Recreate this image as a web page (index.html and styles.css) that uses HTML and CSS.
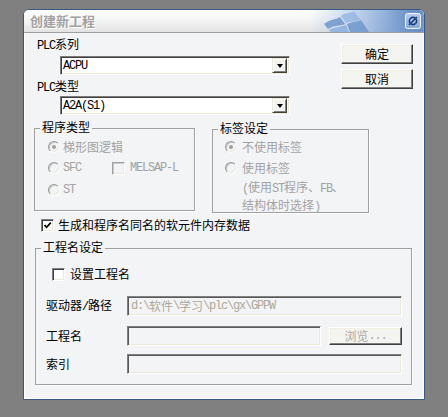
FILE: index.html
```html
<!DOCTYPE html>
<html lang="zh-CN">
<head>
<meta charset="utf-8">
<title>创建新工程</title>
<link rel="stylesheet" href="styles.css">
</head>
<body>
<div class="dialog">
  <div class="titlebar">
    <span class="title">创建新工程</span>
    <svg class="flag" width="50" height="22" viewBox="0 0 50 22">
      <path d="M1 14 C7 9 12 10 17 7 L22 14 C17 16 11 15 5 19 Z" fill="#6f97cd" fill-opacity="0.85"/>
      <path d="M18 6 C22 2 27 4 31 1 L37 9 C33 12 28 11 23 13 Z" fill="#9ab9e2" fill-opacity="0.9"/>
      <path d="M6 20 C11 17 17 17 23 15 L26 22 L7 22 Z" fill="#8fb1de" fill-opacity="0.9"/>
      <path d="M24 14 C29 12 33 12 38 10 L46 22 L27 22 Z" fill="#6f97cd" fill-opacity="0.85"/>
    </svg>
    <span class="close">
      <svg width="16" height="16" viewBox="0 0 16 16">
        <defs>
          <linearGradient id="cg" x1="0" y1="0" x2="0" y2="1">
            <stop offset="0" stop-color="#b7cdec"/>
            <stop offset="1" stop-color="#86a8da"/>
          </linearGradient>
        </defs>
        <rect x="0.5" y="0.5" width="15" height="15" rx="2" fill="url(#cg)" stroke="#f2f6fc"/>
        <circle cx="8" cy="8" r="3.6" fill="none" stroke="#1d407d" stroke-width="1.6"/>
        <line x1="4" y1="12" x2="12" y2="4" stroke="#1d407d" stroke-width="1.6"/>
      </svg>
    </span>
  </div>
  <div class="content">
    <div class="top">
      <div class="plc">
        <div class="label"><span class="lat">PLC</span>系列</div>
        <div class="combo combo1"><span class="combo-text lat">ACPU</span><span class="arrow"><i></i></span></div>
        <div class="label label2"><span class="lat">PLC</span>类型</div>
        <div class="combo combo2"><span class="combo-text lat">A2A(S1)</span><span class="arrow"><i></i></span></div>
      </div>
      <div class="buttons">
        <div class="btn">确定</div>
        <div class="btn">取消</div>
      </div>
    </div>

    <div class="groups">
      <div class="group g-prog">
        <span class="group-title">程序类型</span>
        <div class="row r1"><span class="radio checked"></span><span class="dis">梯形图逻辑</span></div>
        <div class="row r2">
          <span class="cell"><span class="radio"></span><span class="dis lat">SFC</span></span>
          <span class="check disabled"></span><span class="dis lat">MELSAP-L</span>
        </div>
        <div class="row r3"><span class="radio"></span><span class="dis lat">ST</span></div>
      </div>
      <div class="group g-label">
        <span class="group-title">标签设定</span>
        <div class="row r1"><span class="radio wide checked"></span><span class="dis">不使用标签</span></div>
        <div class="row r2"><span class="radio wide"></span><span class="dis">使用标签</span></div>
        <div class="note dis"><span class="lat">(</span>使用<span class="lat">ST</span>程序、<span class="lat">FB</span>、<br>结构体时选择<span class="lat">)</span></div>
      </div>
    </div>

    <div class="row main-check">
      <span class="check on"><svg width="9" height="9" viewBox="0 0 9 9"><path d="M1.5 4 L3.6 6.2 L7.8 1.6" fill="none" stroke="#000" stroke-width="1.7"/></svg></span>
      <span>生成和程序名同名的软元件内存数据</span>
    </div>

    <div class="group g-proj">
      <span class="group-title">工程名设定</span>
      <div class="row set-name"><span class="check"></span><span>设置工程名</span></div>
      <div class="field f1">
        <span class="field-label">驱动器<span class="lat">/</span>路径</span>
        <span class="input full"><span class="lat">d:\</span>软件<span class="lat">\</span>学习<span class="lat">\plc\gx\GPPW</span></span>
      </div>
      <div class="field f2">
        <span class="field-label">工程名</span>
        <span class="input short"></span>
        <span class="btn browse">浏览<span class="lat">...</span></span>
      </div>
      <div class="field f3">
        <span class="field-label">索引</span>
        <span class="input full"></span>
      </div>
    </div>
  </div>
</div>
</body>
</html>
```

FILE: styles.css
```css
* { box-sizing: border-box; }

html, body { margin: 0; }

body {
  width: 448px;
  height: 417px;
  overflow: hidden;
  background: #808080;
  padding: 9px 0 0 23px;
  font-family: "Noto Sans CJK SC", "Noto Sans", sans-serif;
  font-size: 12px;
  line-height: 14px;
  color: #000;
}

.lat {
  font-family: "Liberation Mono", monospace;
  letter-spacing: -1.2px;
}

.dialog {
  width: 402px;
  height: 391px;
  border: 1px solid #3a5884;
  border-radius: 6px 6px 0 0;
  background: #f3f4f6;
  display: flex;
  flex-direction: column;
  overflow: hidden;
}

.titlebar {
  height: 23px;
  flex: none;
  display: flex;
  align-items: center;
  border-bottom: 1px solid #9e9e9e;
  background:
    linear-gradient(to right, rgba(160,190,228,0) 0, rgba(160,190,228,0) 285px, rgba(170,198,232,0.6) 325px, rgba(130,165,214,0.85) 360px, #6c92c8 385px, #6a90c6 398px, #86a6d6 400px),
    linear-gradient(to bottom, #ffffff 0%, #f5f5f5 45%, #e3e3e3 100%);
}

.title {
  margin-left: 6px;
  font-size: 13px;
  font-weight: bold;
  color: #a2a2a2;
  text-shadow: 1px 1px 0 #ffffff;
  line-height: 16px;
}

.flag {
  margin-left: auto;
  align-self: flex-end;
  display: block;
}

.close {
  margin-left: 32px;
  margin-right: 3px;
  width: 16px;
  height: 16px;
  display: block;
}
.close svg { display: block; }

.content {
  flex: 1;
  display: flex;
  flex-direction: column;
  padding: 4px 0 0 10px;
  box-shadow: inset 1px 0 #fff, inset -1px 0 #fff, inset 0 -1px #fff;
}

.top { display: flex; }

.plc { width: 256px; }

.label { margin-left: 3px; height: 14px; }
.label2 { margin-top: 4px; }

.combo {
  margin-left: 26px;
  width: 230px;
  height: 19px;
  background: #fff;
  border: 1px solid;
  border-color: #7a7a7a #ffffff #ffffff #7a7a7a;
  box-shadow: inset 1px 1px #404040, inset -1px -1px #ece9d8;
  display: flex;
  align-items: center;
  padding: 1px 2px 1px 2px;
}
.combo1 { margin-top: 5px; }
.combo2 { margin-top: 3px; }

.combo-text { flex: 1; line-height: 14px; }

.arrow {
  width: 15px;
  height: 15px;
  background: #f3f3ef;
  border: 1px solid;
  border-color: #ece9d8 #404040 #404040 #ece9d8;
  box-shadow: inset 1px 1px #fff, inset -1px -1px #808080;
  display: flex;
  align-items: center;
  justify-content: center;
}
.arrow i {
  width: 0;
  height: 0;
  border-left: 3.5px solid transparent;
  border-right: 3.5px solid transparent;
  border-top: 4px solid #000;
  margin-top: 1px;
}

.buttons {
  margin-left: 51px;
  margin-top: 7px;
  display: flex;
  flex-direction: column;
  gap: 5px;
}

.btn {
  width: 72px;
  height: 20px;
  background: #f4f4f1;
  border: 1px solid;
  border-color: #ffffff #404040 #404040 #ffffff;
  box-shadow: inset -1px -1px #808080, inset 1px 1px #f1efe2;
  display: flex;
  align-items: center;
  justify-content: center;
  line-height: 14px;
}

.groups {
  display: flex;
  align-items: flex-start;
  margin-top: 13px;
}

.group {
  position: relative;
  border: 1px solid #a0a0a0;
  box-shadow: 1px 1px 0 #ffffff;
}

.group-title {
  position: absolute;
  top: -9px;
  left: 5px;
  padding: 0 2px;
  background: #f3f4f6;
  line-height: 14px;
}

.g-prog {
  width: 161px;
  height: 83px;
  padding: 11px 0 0 13px;
}

.g-label {
  width: 157px;
  height: 84px;
  margin-left: 17px;
  margin-top: 1px;
  padding: 10px 0 0 12px;
}

.row {
  display: flex;
  align-items: center;
  height: 14px;
}

.g-prog .r2 { margin-top: 7px; }
.g-prog .r3 { margin-top: 8px; }
.g-label .r2 { margin-top: 7px; }

.cell { display: flex; align-items: center; width: 64px; }

.dis { color: #a3a3a3; }

.radio {
  flex: none;
  position: relative;
  width: 12px;
  height: 12px;
  border-radius: 50%;
  border: 1px solid;
  border-color: #9a9a9a #fbfbfb #fbfbfb #9a9a9a;
  box-shadow: inset 1px 1px #c9c9c9, inset -1px -1px #ece9d8;
  background: #f3f4f6;
  margin-right: 3px;
}
.radio.wide { margin-right: 5px; }
.radio.checked::after {
  content: "";
  position: absolute;
  left: 3px;
  top: 3px;
  width: 4px;
  height: 4px;
  border-radius: 50%;
  background: #a0a0a0;
}

.check {
  flex: none;
  width: 13px;
  height: 13px;
  border: 1px solid;
  border-color: #808080 #ffffff #ffffff #808080;
  box-shadow: inset 1px 1px #404040, inset -1px -1px #ece9d8;
  background: #fff;
  display: flex;
  align-items: center;
  justify-content: center;
  margin-right: 5px;
}
.check svg { display: block; }
.check.disabled {
  background: #f3f4f6;
  border-color: #a0a0a0 #ffffff #ffffff #a0a0a0;
  box-shadow: inset 1px 1px #c9c9c9, inset -1px -1px #ece9d8;
}

.note {
  margin-top: 4px;
  padding-left: 17px;
  line-height: 15px;
}

.main-check {
  margin-top: 5px;
  margin-left: 7px;
}
.main-check .check { margin-right: 4px; }

.g-proj {
  margin-top: 16px;
  margin-left: 1px;
  width: 377px;
  height: 137px;
}

.set-name { margin: 18px 0 0 16px; }

.field {
  display: flex;
  align-items: center;
  margin-left: 10px;
  height: 20px;
}
.f1 { margin-top: 15px; }
.f2 { margin-top: 10px; }
.f3 { margin-top: 8px; }

.field-label { width: 81px; }

.input {
  height: 20px;
  border: 1px solid;
  border-color: #808080 #ffffff #ffffff #808080;
  box-shadow: inset 1px 1px #5a5a5a, inset -1px -1px #ece9d8;
  background: #f3f4f6;
  padding: 0 3px;
  display: flex;
  align-items: center;
  color: #aca899;
  white-space: nowrap;
}
.input.full { width: 275px; }
.input.short { width: 194px; }

.browse {
  width: 73px;
  height: 18px;
  margin-left: 8px;
  color: #a8a8a8;
}
```
